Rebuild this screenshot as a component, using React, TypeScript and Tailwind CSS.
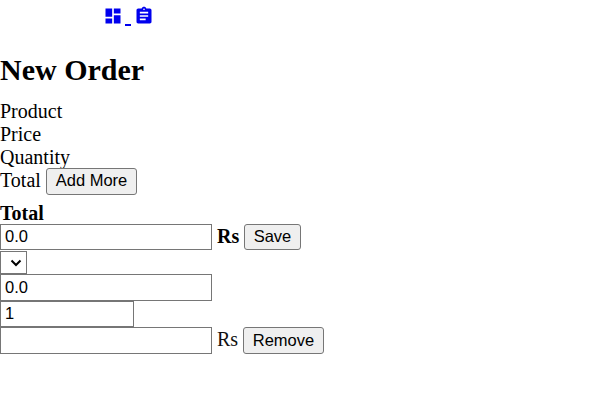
import { MdDashboard, MdAssignment } from "react-icons/md";

const field = "block border border-[#767676] bg-white px-1 pb-px text-[16.5px] leading-[22px] font-['Liberation_Sans',Arial,sans-serif] rounded-none";
const button = "flex items-center justify-center rounded-[3px] border border-[#767676] bg-[#efefef] text-[16.5px] leading-[20px] whitespace-nowrap font-['Liberation_Sans',Arial,sans-serif]";

export default function App() {
  return (
    <div className="h-[420px] w-[612px] overflow-hidden bg-white font-['Liberation_Serif','Times_New_Roman',serif] text-[20px] leading-[23px] text-black">
      <nav className="flex h-[55px] pl-[103px] pt-[6px] text-[#0000ee]">
        <a className="flex">
          <MdDashboard size={20} />
          <span className="mt-[18px] ml-[2px] h-[2px] w-[6px] bg-[#0000ee]" />
        </a>
        <a className="ml-[2.5px]"><MdAssignment size={20} /></a>
      </nav>
      <h1 className="h-[45px] text-[30px] leading-[30px] font-bold">New Order</h1>
      <div>Product</div>
      <div>Price</div>
      <div>Quantity</div>
      <div className="flex h-[33px]">
        <span className="w-[46px]">Total</span>
        <button className={`${button} -mt-px h-[27px] w-[91px] pb-[3px]`}>Add More</button>
      </div>
      <div className="h-[22px] font-bold">Total</div>
      <div className="flex h-[27px]">
        <input className={`${field} h-[26px] w-[212px]`} defaultValue="0.0" />
        <span className="ml-[5px] w-[27px] pt-px font-bold">Rs</span>
        <button className={`${button} h-[26px] w-[57px] pb-[2px]`}>Save</button>
      </div>
      <button aria-label="Product" className="flex h-[23px] w-[27px] items-center justify-end border border-[#767676] bg-white pr-[4px]">
        <svg width="12" height="8" viewBox="0 0 12 8" fill="none" stroke="black" strokeWidth="2">
          <path d="M1.5 1.5 6 6l4.500-4.500" />
        </svg>
      </button>
      <input className={`${field} h-[27px] w-[212px]`} defaultValue="0.0" />
      <input className={`${field} h-[26px] w-[134px]`} defaultValue="1" />
      <div className="flex h-[27px]">
        <input className={`${field} h-[27px] w-[212px]`} />
        <span className="ml-[5px] w-[26px] pt-px text-[#111111]">Rs</span>
        <button className={`${button} h-[27px] w-[81px] pb-px`}>Remove</button>
      </div>
    </div>
  );
}
